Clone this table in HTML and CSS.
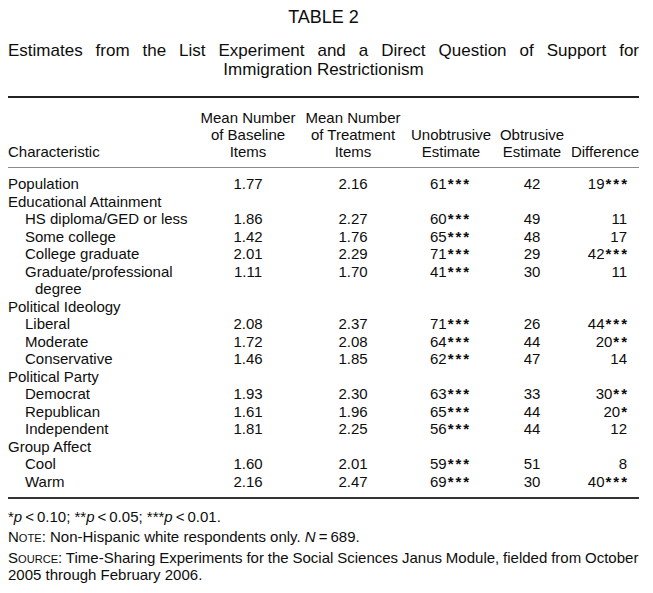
FILE: index.html
```html
<!DOCTYPE html>
<html lang="en">
<head>
<meta charset="utf-8">
<title>Table 2</title>
<link rel="stylesheet" href="styles.css">
</head>
<body>
<div class="page">
  <h1 class="table-label">TABLE 2</h1>
  <h2 class="caption">Estimates from the List Experiment and a Direct Question of Support for Immigration Restrictionism</h2>
  <div class="table-wrap">
    <table class="data">
      <colgroup>
        <col class="w-char">
        <col class="w-base">
        <col class="w-treat">
        <col class="w-unob">
        <col class="w-ob">
        <col class="w-diff">
      </colgroup>
      <thead>
        <tr>
          <th class="h-char">Characteristic</th>
          <th class="h-center">Mean Number<br>of Baseline<br>Items</th>
          <th class="h-center">Mean Number<br>of Treatment<br>Items</th>
          <th class="h-center">Unobtrusive<br>Estimate</th>
          <th class="h-center">Obtrusive<br>Estimate</th>
          <th class="h-right">Difference</th>
        </tr>
      </thead>
      <tbody>
        <tr><td class="grp">Population</td><td class="num">1.77</td><td class="num">2.16</td><td class="unob">61<span class="sig">***</span></td><td class="num">42</td><td class="diff">19<span class="sig">***</span></td></tr>
        <tr><td class="grp">Educational Attainment</td><td></td><td></td><td></td><td></td><td></td></tr>
        <tr><td class="sub">HS diploma/GED or less</td><td class="num">1.86</td><td class="num">2.27</td><td class="unob">60<span class="sig">***</span></td><td class="num">49</td><td class="diff">11</td></tr>
        <tr><td class="sub">Some college</td><td class="num">1.42</td><td class="num">1.76</td><td class="unob">65<span class="sig">***</span></td><td class="num">48</td><td class="diff">17</td></tr>
        <tr><td class="sub">College graduate</td><td class="num">2.01</td><td class="num">2.29</td><td class="unob">71<span class="sig">***</span></td><td class="num">29</td><td class="diff">42<span class="sig">***</span></td></tr>
        <tr><td class="sub">Graduate/professional degree</td><td class="num">1.11</td><td class="num">1.70</td><td class="unob">41<span class="sig">***</span></td><td class="num">30</td><td class="diff">11</td></tr>
        <tr><td class="grp">Political Ideology</td><td></td><td></td><td></td><td></td><td></td></tr>
        <tr><td class="sub">Liberal</td><td class="num">2.08</td><td class="num">2.37</td><td class="unob">71<span class="sig">***</span></td><td class="num">26</td><td class="diff">44<span class="sig">***</span></td></tr>
        <tr><td class="sub">Moderate</td><td class="num">1.72</td><td class="num">2.08</td><td class="unob">64<span class="sig">***</span></td><td class="num">44</td><td class="diff">20<span class="sig">**</span></td></tr>
        <tr><td class="sub">Conservative</td><td class="num">1.46</td><td class="num">1.85</td><td class="unob">62<span class="sig">***</span></td><td class="num">47</td><td class="diff">14</td></tr>
        <tr><td class="grp">Political Party</td><td></td><td></td><td></td><td></td><td></td></tr>
        <tr><td class="sub">Democrat</td><td class="num">1.93</td><td class="num">2.30</td><td class="unob">63<span class="sig">***</span></td><td class="num">33</td><td class="diff">30<span class="sig">**</span></td></tr>
        <tr><td class="sub">Republican</td><td class="num">1.61</td><td class="num">1.96</td><td class="unob">65<span class="sig">***</span></td><td class="num">44</td><td class="diff">20<span class="sig">*</span></td></tr>
        <tr><td class="sub">Independent</td><td class="num">1.81</td><td class="num">2.25</td><td class="unob">56<span class="sig">***</span></td><td class="num">44</td><td class="diff">12</td></tr>
        <tr><td class="grp">Group Affect</td><td></td><td></td><td></td><td></td><td></td></tr>
        <tr><td class="sub">Cool</td><td class="num">1.60</td><td class="num">2.01</td><td class="unob">59<span class="sig">***</span></td><td class="num">51</td><td class="diff">8</td></tr>
        <tr><td class="sub">Warm</td><td class="num">2.16</td><td class="num">2.47</td><td class="unob">69<span class="sig">***</span></td><td class="num">30</td><td class="diff">40<span class="sig">***</span></td></tr>
      </tbody>
    </table>
  </div>
  <div class="notes">
    <p>*<i>p</i>&thinsp;&lt;&thinsp;0.10; **<i>p</i>&thinsp;&lt;&thinsp;0.05; ***<i>p</i>&thinsp;&lt;&thinsp;0.01.</p>
    <p>N<span class="sc">OTE</span>: Non-Hispanic white respondents only. <i>N</i>&thinsp;=&thinsp;689.</p>
    <p class="src"><span class="src-line">S<span class="sc">OURCE</span>: Time-Sharing Experiments for the Social Sciences Janus Module, fielded from October</span><br>2005 through February 2006.</p>
  </div>
</div>
</body>
</html>
```

FILE: styles.css
```css
html, body {
  margin: 0;
  padding: 0;
  background: #ffffff;
}

body {
  font-family: "Liberation Sans", Arial, sans-serif;
  color: #0d0d0d;
}

.page {
  width: 631px;
  margin-left: 8px;
  padding-top: 6px;
}

.table-label {
  margin: 0;
  font-size: 18px;
  line-height: 22px;
  font-weight: normal;
  text-align: center;
}

.caption {
  margin: 13px 0 0;
  font-size: 17px;
  line-height: 19px;
  font-weight: normal;
  text-align: justify;
  text-align-last: center;
}

.table-wrap {
  margin-top: 17px;
  border-top: 2px solid #222222;
  border-bottom: 2px solid #333333;
}

.data {
  width: 631px;
  border-collapse: separate;
  border-spacing: 0;
  table-layout: fixed;
  font-size: 15px;
}

.w-char { width: 188px; }
.w-base { width: 104px; }
.w-treat { width: 106px; }
.w-unob { width: 90px; }
.w-ob { width: 72px; }
.w-diff { width: 71px; }

.data th {
  font-weight: normal;
  line-height: 17px;
  padding: 11px 0 7px;
  vertical-align: bottom;
  border-bottom: 1px solid #8a8a8a;
  white-space: nowrap;
}

.h-char { text-align: left; }
.h-center { text-align: center; }
.h-right { text-align: right; }

.data td {
  line-height: 17.5px;
  padding: 0;
  vertical-align: top;
}

.data tbody tr:first-child td { padding-top: 7px; }
.data tbody tr:last-child td { padding-bottom: 6.5px; }

.data td.grp { text-align: left; }

.data td.sub {
  padding-left: 27px;
  text-indent: -10px;
  text-align: left;
}

.data td.num { text-align: center; }

.data td.unob {
  text-align: left;
  padding-left: 24px;
}

.data td.diff {
  text-align: right;
  padding-right: 12px;
}

.sig {
  font-weight: bold;
  letter-spacing: 2px;
  margin-left: 1px;
  margin-right: -2px;
}

.notes {
  margin-top: 9px;
  font-size: 15px;
  line-height: 17px;
}

.notes p {
  margin: 0 0 3.5px;
}

.src-line {
  white-space: nowrap;
  word-spacing: -0.3px;
}

.sc {
  font-size: 0.74em;
  line-height: 1;
}
```
